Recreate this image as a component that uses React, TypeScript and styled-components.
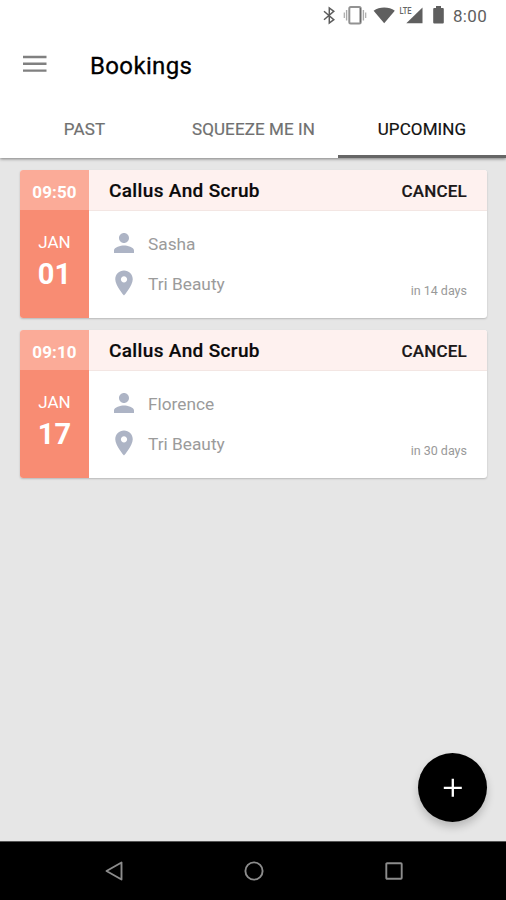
import React from "react";
import styled, { createGlobalStyle } from "styled-components";

const GlobalStyle = createGlobalStyle`
  * { box-sizing: border-box; }
  body { margin: 0; font-family: Roboto, sans-serif; background: #e6e6e6; }
  button { font-family: inherit; border: 0; padding: 0; background: none; }
  svg { display: block; flex: none; }
`;

const Screen = styled.div`
  display: flex;
  flex-direction: column;
  width: 506px;
  height: 900px;
  background: #e6e6e6;
  position: relative;
  overflow: hidden;
`;

const Header = styled.header`
  flex: none;
  height: 158px;
  display: flex;
  flex-direction: column;
  background: #fff;
  box-shadow: 0 1px 3px rgba(0, 0, 0, 0.45);
  z-index: 1;
`;

const StatusBar = styled.div`
  height: 30px;
  display: flex;
  justify-content: flex-end;
  align-items: center;
  padding-right: 18px;
`;

const Clock = styled.span`
  width: 35px;
  margin-left: 8px;
  padding-top: 1px;
  font-size: 17px;
  line-height: 20px;
  letter-spacing: 0.3px;
  color: #606060;
  white-space: nowrap;
`;

const TitleBar = styled.div`
  height: 70px;
  display: flex;
  align-items: center;
  padding-left: 23px;
`;

const MenuButton = styled.button`
  width: 67px;
  height: 20px;
  margin-top: -2px;
`;

const Title = styled.h1`
  margin: 2px 0 0;
  font-size: 24px;
  font-weight: 400;
  line-height: 30px;
  letter-spacing: 0.35px;
  color: #000;
  -webkit-text-stroke: 0.3px #000;
`;

const Tabs = styled.nav`
  flex: 1;
  display: grid;
  grid-template-columns: 169px 169px 168px;
`;

const Tab = styled.button<{ $active: boolean }>`
  border-bottom: 3px solid ${(p) => (p.$active ? "#666" : "transparent")};
  padding-top: 3px;
  font-size: 17px;
  letter-spacing: 0.1px;
  color: ${(p) => (p.$active ? "#111" : "#707070")};
  -webkit-text-stroke: 0.2px ${(p) => (p.$active ? "#111" : "#707070")};
  white-space: nowrap;
`;

const List = styled.main`
  flex: 1;
  display: flex;
  flex-direction: column;
  gap: 12px;
  padding: 12px 19px 0 20px;
`;

const Card = styled.article`
  height: 148px;
  display: grid;
  grid-template-columns: 69px 1fr;
  grid-template-rows: 40px 1fr;
  border-radius: 3px;
  overflow: hidden;
  background: #fff;
  box-shadow: 0 1px 2px rgba(0, 0, 0, 0.2);
`;

const Time = styled.div`
  display: flex;
  align-items: center;
  justify-content: center;
  padding-top: 4px;
  background: #fbab98;
  color: #fff;
  font-size: 17px;
  font-weight: 700;
  letter-spacing: 0.1px;
`;

const CardHead = styled.div`
  display: flex;
  align-items: center;
  justify-content: space-between;
  padding: 1px 20px 0;
  background: #fef1ef;
  border-bottom: 1px solid #f3e6e3;
  height: 41px;
`;

const Service = styled.h2`
  margin: 0;
  font-size: 19px;
  font-weight: 500;
  letter-spacing: 0.35px;
  color: #0a0a0a;
  -webkit-text-stroke: 0.2px #0a0a0a;
`;

const Cancel = styled.button`
  padding-top: 1px;
  font-size: 17px;
  font-weight: 500;
  letter-spacing: 0.2px;
  color: #1c1818;
  -webkit-text-stroke: 0.2px #1c1818;
`;

const DateBlock = styled.div`
  display: flex;
  flex-direction: column;
  align-items: center;
  padding-top: 21px;
  background: #f88c73;
  color: #fff;
`;

const Month = styled.span`
  font-size: 17px;
  line-height: 22px;
`;

const Day = styled.strong`
  font-size: 29px;
  font-weight: 700;
  line-height: 34px;
  margin-top: 4px;
`;

const Details = styled.div`
  display: flex;
  justify-content: space-between;
  padding: 18px 20px 0 20px;
`;

const Facts = styled.div`
  display: flex;
  flex-direction: column;
  gap: 10px;
`;

const Fact = styled.div`
  display: flex;
  align-items: center;
  gap: 9px;
  height: 30px;
  font-size: 17.3px;
  color: #9b9b9b;
`;

const FactText = styled.span`
  padding-top: 2px;
`;

const Due = styled.span`
  align-self: flex-end;
  margin-bottom: 20px;
  font-size: 12.5px;
  line-height: 15px;
  color: #999;
`;

const Fab = styled.button`
  position: absolute;
  right: 19px;
  bottom: 78px;
  width: 69px;
  height: 69px;
  border-radius: 50%;
  background: #000;
  display: flex;
  align-items: center;
  justify-content: center;
  box-shadow: 0 5px 9px rgba(0, 0, 0, 0.2);
`;

const NavBar = styled.footer`
  flex: none;
  height: 59px;
  background: #000;
  border-top: 1px solid #555;
  display: flex;
  justify-content: center;
  align-items: center;
  gap: 120px;
  padding-left: 1px;
`;

const StatusIcons = () => (
  <svg width="122" height="30" viewBox="323 0 122 30">
    <path d="M324 11.2 L333.8 19.7 L329.3 23 V8 L333.8 11.4 L324 19.8" fill="none" stroke="#5c5c5c" strokeWidth="1.5" />
    <rect x="349.3" y="7" width="11.4" height="16.6" rx="1.5" fill="none" stroke="#929292" strokeWidth="2" />
    <path d="M360.3 8v14.5" stroke="#666" strokeWidth="1.2" />
    <path d="M346.6 10v10.5M363.4 10v10.5" stroke="#aaa" strokeWidth="1.4" />
    <path d="M344.3 12.5v5.5M365.7 12.5v5.5" stroke="#aaa" strokeWidth="1.2" />
    <path d="M384.2 23.2 L373.6 10.7 Q378.2 7.5 384.2 7.5 T394.8 10.7 Z" fill="#5f5f5f" />
    <path d="M422.5 7.5V23.3H406.3Z" fill="#5f5f5f" />
    <text x="399.5" y="14" fontFamily="Roboto, sans-serif" fontSize="9" fontWeight="500" fill="#666" textLength="12" lengthAdjust="spacingAndGlyphs">LTE</text>
    <path d="M436 8V6h5v2h1.8a1 1 0 0 1 1 1v13.4a1 1 0 0 1-1 1h-8.6a1 1 0 0 1-1-1V9a1 1 0 0 1 1-1z" fill="#5f5f5f" />
  </svg>
);

const MenuIcon = () => (
  <svg width="24" height="20" viewBox="0 0 24 20">
    <path d="M0 3h23.5M0 9.8h23.5M0 16.6h23.5" stroke="#808080" strokeWidth="2.4" />
  </svg>
);

const PersonIcon = () => (
  <svg width="30" height="30" viewBox="0 0 24 24" fill="#adb4c5">
    <path d="M12 12c2.21 0 4-1.79 4-4s-1.79-4-4-4-4 1.79-4 4 1.79 4 4 4zm0 2c-2.67 0-8 1.34-8 4v2h16v-2c0-2.66-5.33-4-8-4z" />
  </svg>
);

const PinIcon = () => (
  <svg width="30" height="30" viewBox="0 0 24 24" fill="#adb4c5">
    <path d="M12 2C8.13 2 5 5.13 5 9c0 5.25 7 13 7 13s7-7.75 7-13c0-3.87-3.13-7-7-7zm0 9.5c-1.38 0-2.5-1.12-2.5-2.5s1.12-2.5 2.5-2.5 2.5 1.12 2.5 2.5-1.12 2.5-2.5 2.5z" />
  </svg>
);

const tabs = [
  { label: "PAST", active: false },
  { label: "SQUEEZE ME IN", active: false },
  { label: "UPCOMING", active: true },
];

const bookings = [
  { time: "09:50", month: "JAN", day: "01", service: "Callus And Scrub", person: "Sasha", place: "Tri Beauty", due: "in 14 days" },
  { time: "09:10", month: "JAN", day: "17", service: "Callus And Scrub", person: "Florence", place: "Tri Beauty", due: "in 30 days" },
];

export default function App() {
  return (
    <Screen>
      <GlobalStyle />
      <Header>
        <StatusBar>
          <StatusIcons />
          <Clock>8:00</Clock>
        </StatusBar>
        <TitleBar>
          <MenuButton aria-label="Menu"><MenuIcon /></MenuButton>
          <Title>Bookings</Title>
        </TitleBar>
        <Tabs>
          {tabs.map((t) => (
            <Tab key={t.label} $active={t.active}>{t.label}</Tab>
          ))}
        </Tabs>
      </Header>
      <List>
        {bookings.map((b) => (
          <Card key={b.time}>
            <Time>{b.time}</Time>
            <CardHead>
              <Service>{b.service}</Service>
              <Cancel>CANCEL</Cancel>
            </CardHead>
            <DateBlock>
              <Month>{b.month}</Month>
              <Day>{b.day}</Day>
            </DateBlock>
            <Details>
              <Facts>
                <Fact><PersonIcon /><FactText>{b.person}</FactText></Fact>
                <Fact><PinIcon /><FactText>{b.place}</FactText></Fact>
              </Facts>
              <Due>{b.due}</Due>
            </Details>
          </Card>
        ))}
      </List>
      <Fab aria-label="Add booking">
        <svg width="20" height="20" viewBox="0 0 20 20">
          <path d="M9.8 0.8v18M0.8 9.8h18" stroke="#fff" strokeWidth="2.3" />
        </svg>
      </Fab>
      <NavBar>
        <svg width="20" height="20" viewBox="0 0 20 20" fill="none" stroke="#8c8c8c" strokeWidth="1.9">
          <path d="M17.5 1.5v17L2.5 10z" strokeLinejoin="round" />
        </svg>
        <svg width="20" height="20" viewBox="0 0 20 20" fill="none" stroke="#8c8c8c" strokeWidth="1.9">
          <circle cx="10" cy="10" r="8.6" />
        </svg>
        <svg width="20" height="20" viewBox="0 0 20 20" fill="none" stroke="#8c8c8c" strokeWidth="1.9">
          <rect x="2.3" y="2.3" width="15.4" height="15.4" rx="0.8" />
        </svg>
      </NavBar>
    </Screen>
  );
}
